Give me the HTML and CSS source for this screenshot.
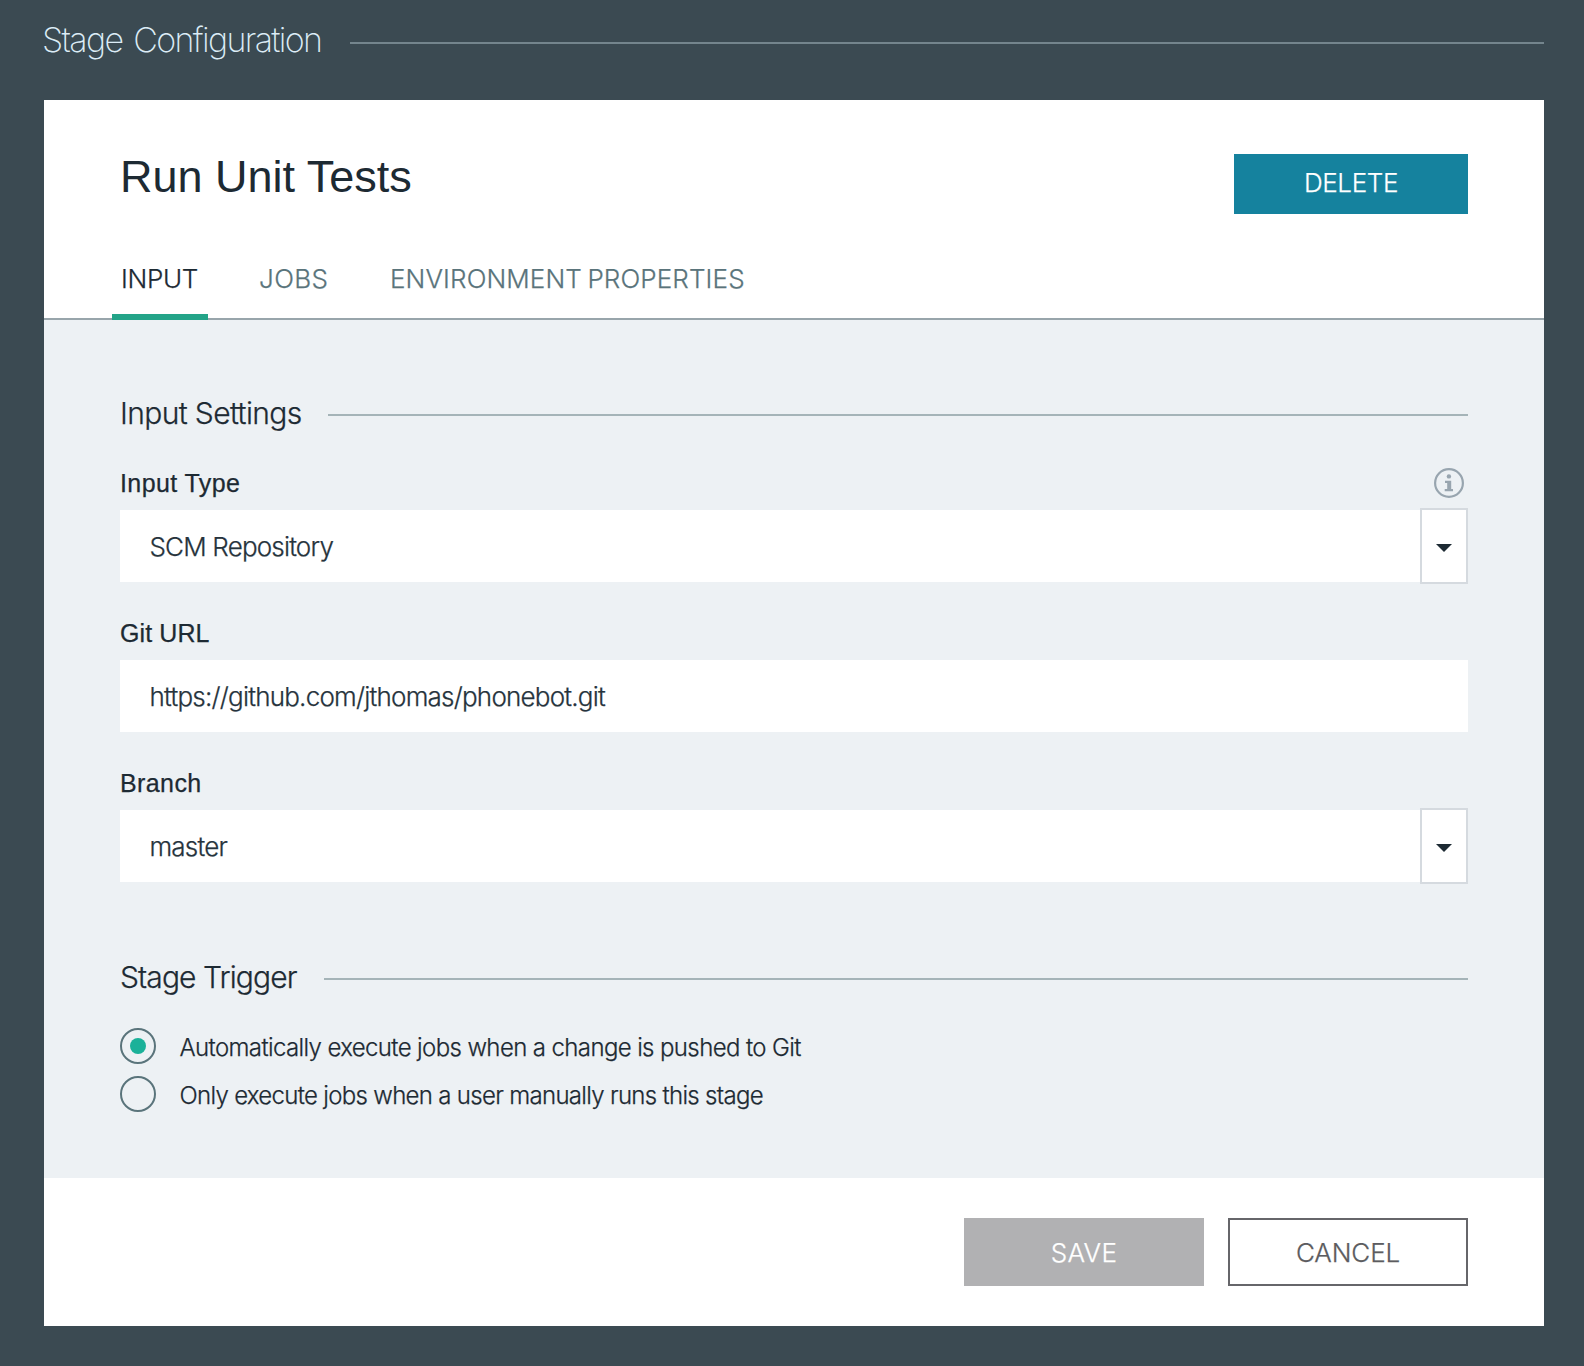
FILE: index.html
```html
<!DOCTYPE html>
<html lang="en">
<head>
<meta charset="utf-8">
<title>Stage Configuration</title>
<link rel="stylesheet" href="styles.css">
</head>
<body>
<header class="page-header">
  <h1 class="page-title">Stage Configuration</h1>
  <span class="rule rule-dark"></span>
</header>
<main class="panel">
  <div class="panel-top">
    <div class="stage-head">
      <h2 class="stage-name">Run Unit Tests</h2>
      <button class="btn btn-delete">DELETE</button>
    </div>
    <nav class="tabs">
      <a class="tab tab-input">INPUT</a>
      <a class="tab tab-jobs">JOBS</a>
      <a class="tab tab-env">ENVIRONMENT PROPERTIES</a>
    </nav>
  </div>
  <div class="panel-body">
    <div class="section-head">
      <h3 class="section-title title-input">Input Settings</h3>
      <span class="rule"></span>
    </div>
    <div class="fields">
      <div class="field">
        <div class="label-row">
          <label class="label">Input Type</label>
          <svg class="info" width="30" height="30" viewBox="0 0 30 30">
            <circle cx="15" cy="15" r="13.9" fill="none" stroke="#98a5af" stroke-width="2.2"/>
            <circle cx="14.9" cy="8.4" r="2.2" fill="#98a5af"/>
            <path d="M11 12.8h6.2v8.1H19v2.3h-8.3v-2.3h2.5v-5.8H11z" fill="#98a5af"/>
          </svg>
        </div>
        <div class="control">
          <span class="value">SCM Repository</span>
          <span class="drop"><svg width="16" height="8" viewBox="0 0 16 8"><path d="M0 0h16L8 8z" fill="#1d2a33"/></svg></span>
        </div>
      </div>
      <div class="field">
        <div class="label-row"><label class="label label-git">Git URL</label></div>
        <div class="control"><span class="value value-url">https://github.com/jthomas/phonebot.git</span></div>
      </div>
      <div class="field">
        <div class="label-row"><label class="label">Branch</label></div>
        <div class="control">
          <span class="value">master</span>
          <span class="drop"><svg width="16" height="8" viewBox="0 0 16 8"><path d="M0 0h16L8 8z" fill="#1d2a33"/></svg></span>
        </div>
      </div>
    </div>
    <div class="section-head">
      <h3 class="section-title title-trigger">Stage Trigger</h3>
      <span class="rule"></span>
    </div>
    <div class="options">
      <label class="option"><span class="radio checked"></span><span class="option-text">Automatically execute jobs when a change is pushed to Git</span></label>
      <label class="option"><span class="radio"></span><span class="option-text text-manual">Only execute jobs when a user manually runs this stage</span></label>
    </div>
  </div>
  <footer class="panel-foot">
    <button class="btn btn-save">SAVE</button>
    <button class="btn btn-cancel">CANCEL</button>
  </footer>
</main>
</body>
</html>
```
FILE: styles.css
```css
* { box-sizing: border-box; }

body {
  margin: 0;
  min-height: 1366px;
  padding: 0 40px 40px 44px;
  background: #3b4a52;
  color: #1d2a33;
  font-family: Inter, "Liberation Sans", sans-serif;
  font-weight: 300;
}

h1, h2, h3 { margin: 0; font-weight: inherit; }

.rule { flex: 1; height: 2px; background: #a5b4b8; }
.rule-dark { background: #74858d; }

/* Page header */
.page-header { display: flex; align-items: center; height: 100px; padding-bottom: 14px; gap: 28px; }
.page-title {
  width: 280px;
  margin-left: -2px;
  padding-bottom: 7px;
  font-size: 34px;
  font-weight: 200;
  line-height: 60px;
  letter-spacing: -1.65px;
  word-spacing: 3px;
  color: #dcecf6;
  white-space: nowrap;
}

/* Panel top */
.panel { background: #fff; }
.panel-top { height: 220px; border-bottom: 2px solid #98a5ab; }
.stage-head { display: flex; justify-content: space-between; padding: 54px 76px 0; }
.stage-name { font: 400 45px/46px "Liberation Sans", sans-serif; }

/* Slight stroke gives the light face a little more body */
.btn, .tab, .value, .option-text, .section-title { -webkit-text-stroke: 0.25px currentColor; }

.btn {
  border: 0;
  padding: 0;
  font-family: inherit;
  font-size: 26px;
  font-weight: 300;
}
.btn-delete {
  width: 234px;
  height: 60px;
  padding-bottom: 3px;
  background: #15829e;
  color: #fff;
  letter-spacing: -0.35px;
}

.tabs { display: flex; padding-left: 68px; }
.tab { height: 106px; line-height: 129px; font-size: 26px; color: #5a747b; white-space: nowrap; }
.tab-input {
  width: 96px;
  margin-right: 51px;
  padding-left: 9px;
  border-bottom: 6px solid #23a488;
  color: #1d2a33;
  letter-spacing: -0.3px;
}
.tab-jobs { width: 131px; letter-spacing: 0.4px; }
.tab-env { letter-spacing: 0.12px; word-spacing: -2px; }

/* Panel body */
.panel-body { height: 858px; padding: 70px 76px 0; background: #edf1f4; }
.section-head { display: flex; align-items: center; gap: 27px; height: 50px; }
.section-title { padding-bottom: 4px; font-size: 30px; line-height: 40px; white-space: nowrap; }
.title-input { width: 181px; letter-spacing: -0.63px; }
.title-trigger { width: 177px; letter-spacing: -0.9px; }

.fields { display: flex; flex-direction: column; gap: 24px; padding: 16px 0 72px; }
.label-row { display: flex; align-items: center; justify-content: space-between; height: 54px; }
.label {
  font: 400 25px/30px "Liberation Sans", sans-serif;
  letter-spacing: 0.4px;
  -webkit-text-stroke: 0.25px #1d2a33;
}
.label-git { letter-spacing: 0.1px; }
.info { margin-right: 4px; }

.control { display: flex; justify-content: space-between; height: 72px; padding-left: 29.5px; background: #fff; }
.value { font-size: 26px; line-height: 73px; letter-spacing: -0.82px; color: #26333c; }
.value-url { letter-spacing: -0.78px; }
.drop {
  display: flex;
  align-items: center;
  justify-content: center;
  width: 48px;
  height: 76px;
  margin-top: -2px;
  padding-top: 4px;
  border: 2px solid #d5dadf;
  background: #fff;
}

.options { display: flex; flex-direction: column; gap: 12px; padding-top: 24px; }
.option { display: flex; align-items: center; gap: 24px; height: 36px; }
.radio {
  display: flex;
  align-items: center;
  justify-content: center;
  width: 36px;
  height: 36px;
  border: 2px solid #5a747b;
  border-radius: 50%;
}
.radio.checked::after { content: ""; width: 16px; height: 16px; border-radius: 50%; background: #1bb199; }
.option-text { margin-left: -0.5px; padding-top: 4px; font-size: 24px; line-height: 30px; letter-spacing: -0.62px; }
.text-manual { letter-spacing: -0.69px; }

/* Footer */
.panel-foot { display: flex; justify-content: flex-end; gap: 24px; height: 148px; padding: 40px 76px 0; }
.btn-save, .btn-cancel { width: 240px; height: 68px; }
.btn-save { background: #b1b1b3; color: #fff; letter-spacing: 0.3px; }
.btn-cancel { border: 2px solid #66666a; background: #fff; color: #5c5c60; letter-spacing: -0.1px; }
```
